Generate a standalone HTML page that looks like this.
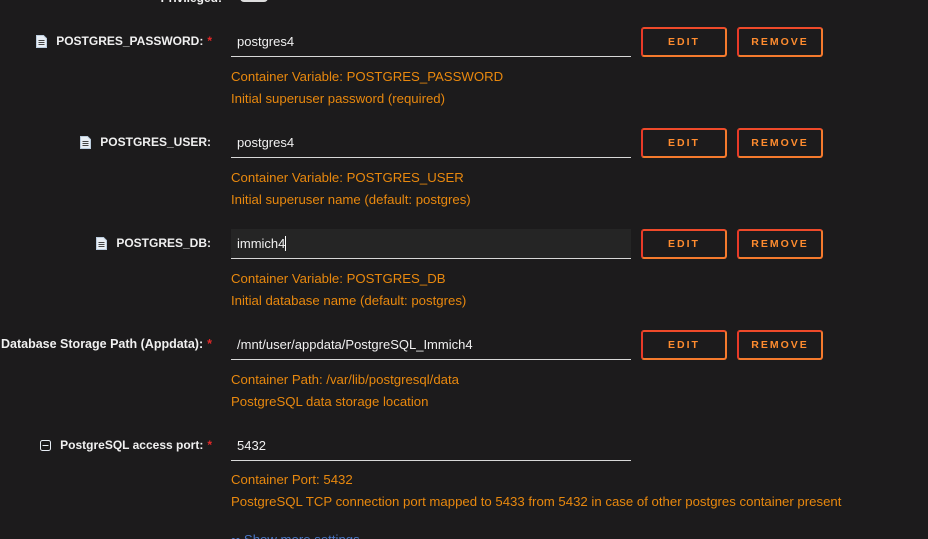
<!DOCTYPE html>
<html><head><style>
html,body{margin:0;width:928px;height:539px;overflow:hidden}
body{background:#1c1b1c;font-family:"Liberation Sans",sans-serif;position:relative}
.lbl{position:absolute;right:716px;font-size:12px;font-weight:bold;color:#f0f0f0;white-space:nowrap;display:flex;align-items:center}
.lbl .ic{margin-right:9px}
.req{color:#e22828;margin-left:4px}
.inp{position:absolute;left:231px;width:400px;height:30px;border-bottom:1px solid #d8d8d8;color:#f0f0f0;font-size:13px;line-height:30px;padding-left:6px;box-sizing:border-box}
.btn{position:absolute;height:30px;box-sizing:border-box;border:2px solid;border-radius:3px;border-color:#ef4a2a #f57a2d #f57a2d #e83a28;color:#ff8c2f;font-size:10.5px;font-weight:bold;letter-spacing:2px;text-align:center;line-height:26px;font-family:"Liberation Sans",sans-serif}
.d{position:absolute;left:231px;color:#e8880e;font-size:13.2px;white-space:nowrap}
</style></head><body>
<div class="lbl" style="top:-9px;right:706px">Privileged:</div>
<div style="position:absolute;left:240px;top:-6px;width:28px;height:8px;border-radius:4px;background:#ddd"></div>

<div class="lbl" style="top:34px"><svg class="ic" width="11" height="13" viewBox="0 0 11 13"><path d="M.5.5h7l3 3v9h-10z" fill="#e8eef5" stroke="#bcd"/><path d="M2.5 5.5h6M2.5 7.5h6M2.5 9.5h6" stroke="#444"/></svg>POSTGRES_PASSWORD:<span class="req">*</span></div>
<div class="inp" style="top:27px">postgres4</div>
<div class="btn" style="left:641px;top:27px;width:86px">EDIT</div>
<div class="btn" style="left:737px;top:27px;width:86px">REMOVE</div>
<div class="d" style="top:69px">Container Variable: POSTGRES_PASSWORD</div>
<div class="d" style="top:91px">Initial superuser password (required)</div>

<div class="lbl" style="top:135px;right:717px"><svg class="ic" width="11" height="13" viewBox="0 0 11 13"><path d="M.5.5h7l3 3v9h-10z" fill="#e8eef5" stroke="#bcd"/><path d="M2.5 5.5h6M2.5 7.5h6M2.5 9.5h6" stroke="#444"/></svg>POSTGRES_USER:</div>
<div class="inp" style="top:128px">postgres4</div>
<div class="btn" style="left:641px;top:128px;width:86px">EDIT</div>
<div class="btn" style="left:737px;top:128px;width:86px">REMOVE</div>
<div class="d" style="top:170px">Container Variable: POSTGRES_USER</div>
<div class="d" style="top:192px">Initial superuser name (default: postgres)</div>

<div class="lbl" style="top:236px;right:717px"><svg class="ic" width="11" height="13" viewBox="0 0 11 13"><path d="M.5.5h7l3 3v9h-10z" fill="#e8eef5" stroke="#bcd"/><path d="M2.5 5.5h6M2.5 7.5h6M2.5 9.5h6" stroke="#444"/></svg>POSTGRES_DB:</div>
<div class="inp" style="top:229px;background:#252525">immich4<span style="display:inline-block;width:1px;height:15px;background:#fff;vertical-align:-3px"></span></div>
<div class="btn" style="left:641px;top:229px;width:86px">EDIT</div>
<div class="btn" style="left:737px;top:229px;width:86px">REMOVE</div>
<div class="d" style="top:271px">Container Variable: POSTGRES_DB</div>
<div class="d" style="top:293px">Initial database name (default: postgres)</div>

<div class="lbl" style="top:337px;font-size:12.5px">Database Storage Path (Appdata):<span class="req">*</span></div>
<div class="inp" style="top:330px">/mnt/user/appdata/PostgreSQL_Immich4</div>
<div class="btn" style="left:641px;top:330px;width:86px">EDIT</div>
<div class="btn" style="left:737px;top:330px;width:86px">REMOVE</div>
<div class="d" style="top:372px">Container Path: /var/lib/postgresql/data</div>
<div class="d" style="top:394px">PostgreSQL data storage location</div>

<div class="lbl" style="top:438px"><svg class="ic" width="11" height="11" viewBox="0 0 11 11"><rect x=".5" y=".5" width="10" height="10" rx="2" fill="none" stroke="#e8eef5"/><path d="M2.5 5.5h6" stroke="#e8eef5"/></svg>PostgreSQL access port:<span class="req">*</span></div>
<div class="inp" style="top:431px">5432</div>
<div class="d" style="top:472px">Container Port: 5432</div>
<div class="d" style="top:494px">PostgreSQL TCP connection port mapped to 5433 from 5432 in case of other postgres container present</div>
<div class="d" style="top:532px;color:#4a78c8">•• Show more settings ...</div>
</body></html>
